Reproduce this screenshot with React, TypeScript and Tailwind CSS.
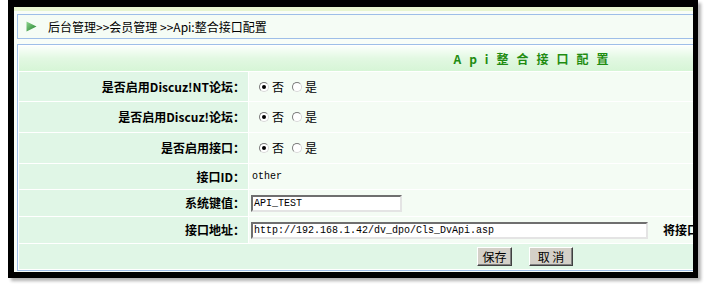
import React from "react";

const cjk = "font-['Noto_Sans_CJK_SC',sans-serif]";
const mono = "font-['Liberation_Mono',monospace]";

const Radio = ({ checked }: { checked?: boolean }) => (
  <span className="inline-flex h-[10px] w-[10px] items-center justify-center rounded-full border border-t-[#7b7b7b] border-l-[#7b7b7b] border-b-[#d8d8d8] border-r-[#d8d8d8] bg-white">
    {checked && <span className="h-[4px] w-[4px] rounded-full bg-black" />}
  </span>
);

const YesNo = () => (
  <div className={`flex items-center pl-[10px] text-[12px] text-black ${cjk}`}>
    <Radio checked />
    <span className="ml-[3px]">否</span>
    <span className="ml-[8px] flex">
      <Radio />
    </span>
    <span className="ml-[3px]">是</span>
  </div>
);

const Row = ({
  label,
  height,
  children,
}: {
  label: string;
  height: string;
  children: React.ReactNode;
}) => (
  <div className={`flex gap-px ${height}`}>
    <div
      className={`flex w-[229px] shrink-0 items-center justify-end bg-[#e0f6e6] pr-[3px] text-[12px] font-bold text-black ${cjk}`}
    >
      {label}
    </div>
    <div className="flex flex-1 items-center bg-[#f4fcf4]">{children}</div>
  </div>
);

const inputBox =
  "flex h-[17px] items-center border-2 border-t-[#6f6f6f] border-l-[#6f6f6f] border-b-[#e4e4e4] border-r-[#e4e4e4] bg-white pl-[1px] text-[10px] text-black";

const Button = ({ label, width }: { label: string; width: string }) => (
  <div
    className={`flex h-[19px] ${width} items-center justify-center border border-t-white border-l-white border-b-[#404040] border-r-[#404040] bg-[#d4d0c8] text-[12px] text-black ${cjk} shadow-[inset_-1px_-1px_0_#808080]`}
  >
    {label}
  </div>
);

export default function App() {
  return (
    <div className="h-[302px] w-[706px] bg-white pl-[8px]">
      <div className="box-border h-[278px] w-[690px] border-t-[7px] border-l-[6px] border-r-[5px] border-b-[6px] border-black shadow-[3px_3px_3px_rgba(0,0,0,0.3)]">
        <div className="h-full w-full overflow-hidden bg-[#f8fdf8]">
          <div className="h-[4px] w-[1100px] bg-[#e8f5d0]" />
          <div className="ml-[3px] mt-[3px] flex h-[25px] w-[1028px] items-center border border-[#9ebee8] bg-[#f5fcf5]">
            <svg width="11" height="11" viewBox="0 0 11 11" className="ml-[8px]">
              <defs>
                <linearGradient id="tri" x1="0" y1="0" x2="1" y2="1">
                  <stop offset="0" stopColor="#8fd68f" />
                  <stop offset="1" stopColor="#1f7f2a" />
                </linearGradient>
              </defs>
              <path d="M0.5 0.5 L10.5 5.5 L0.5 10.5 Z" fill="url(#tri)" />
            </svg>
            <span className={`ml-[11px] text-[12px] text-black ${cjk}`}>
              后台管理&gt;&gt;会员管理 &gt;&gt;Api:整合接口配置
            </span>
          </div>

          <div className="ml-[3px] mt-[5px] w-[1028px] border border-[#9ebee8] bg-white p-px">
            <div className="flex flex-col gap-px">
              <div
                className={`flex h-[25px] items-center justify-center bg-gradient-to-b from-[#fbfffb] via-[#e2f8e2] to-[#d6f5d6] text-[12px] font-bold tracking-[8px] text-[#1f8c12] ${cjk}`}
              >
                <span className="pl-[8px]">Api整合接口配置</span>
              </div>
              <Row label="是否启用Discuz!NT论坛：" height="h-[29px]">
                <YesNo />
              </Row>
              <Row label="是否启用Discuz!论坛：" height="h-[30px]">
                <YesNo />
              </Row>
              <Row label="是否启用接口：" height="h-[30px]">
                <YesNo />
              </Row>
              <Row label="接口ID：" height="h-[25px]">
                <span className={`pl-[3px] text-[10px] text-black ${mono}`}>other</span>
              </Row>
              <Row label="系统键值：" height="h-[26px]">
                <div className={`ml-[2px] w-[151px] ${inputBox} ${mono}`}>API_TEST</div>
              </Row>
              <Row label="接口地址：" height="h-[26px]">
                <div className={`ml-[2px] w-[397px] ${inputBox} ${mono}`}>
                  http://192.168.1.42/dv_dpo/Cls_DvApi.asp
                </div>
                <span className={`ml-[15px] whitespace-nowrap text-[12px] font-bold text-black ${cjk}`}>
                  将接口
                </span>
              </Row>
              <div className="flex h-[25px] items-center justify-center gap-[17px] bg-[#e0f6e6] pr-[12px]">
                <Button label="保存" width="w-[35px]" />
                <Button label="取 消" width="w-[44px]" />
              </div>
            </div>
          </div>
        </div>
      </div>
    </div>
  );
}
